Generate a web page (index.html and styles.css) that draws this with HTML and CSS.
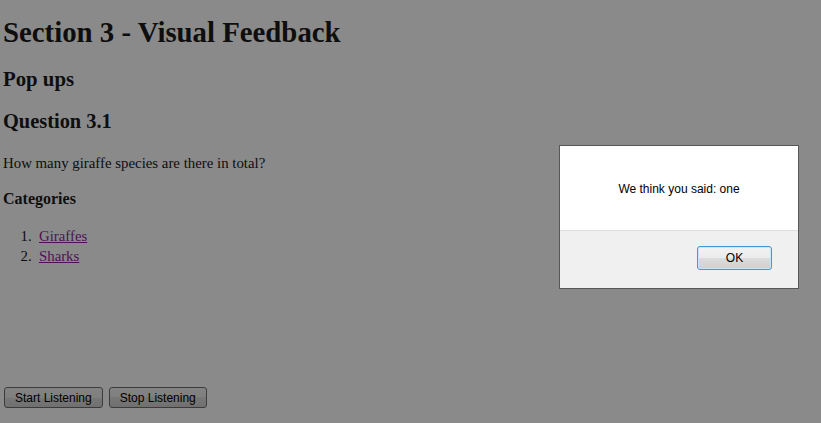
FILE: index.html
```html
<!DOCTYPE html>
<html>
<head>
<meta charset="utf-8">
<link rel="stylesheet" href="styles.css">
</head>
<body>
<div class="page">
  <h1 class="title">Section 3 - Visual Feedback</h1>
  <h2 class="sub">Pop ups</h2>
  <h2 class="sub q">Question 3.1</h2>
  <p class="text">How many giraffe species are there in total?</p>
  <h4 class="cat">Categories</h4>
  <ol class="list">
    <li><a href="#">Giraffes</a></li>
    <li><a href="#">Sharks</a></li>
  </ol>
  <div class="controls">
    <button class="btn">Start Listening</button>
    <button class="btn">Stop Listening</button>
  </div>
</div>
<div class="overlay"></div>
<div class="dialog">
  <div class="dialog-body">We think you said: one</div>
  <div class="dialog-foot"><button class="ok">OK</button></div>
</div>
</body>
</html>
```
FILE: styles.css
```css
html, body {
  margin: 0;
  padding: 0;
  background: #fff;
  height: 100%;
  overflow: hidden;
}
.page {
  padding: 0 3px;
  font-family: "Liberation Serif", "Times New Roman", serif;
  color: #1a1a1a;
  height: 423px;
  display: flex;
  flex-direction: column;
}
.title {
  font-size: 28.8px;
  line-height: 34px;
  margin: 15px 0 0 0;
  font-weight: bold;
}
.sub {
  font-size: 20.8px;
  line-height: 24px;
  margin: 18px 0 0 0;
}
.sub.q {
  font-size: 20.4px;
}
.text {
  font-size: 14.85px;
  line-height: 18px;
  margin: 21px 0 0 0;
}
.cat {
  font-size: 16px;
  line-height: 18px;
  margin: 18px 0 0 0;
}
.list {
  font-size: 14.8px;
  line-height: 20px;
  margin: 18px 0 0 0;
  padding-left: 36px;
}
.list li::marker {
  content: counter(list-item) ".  ";
}
.list a {
  color: #901f9e;
}
.controls {
  margin-top: auto;
  margin-bottom: 15px;
  display: flex;
  gap: 6px;
  padding-left: 1px;
}
.btn {
  font-family: "Liberation Sans", Arial, sans-serif;
  font-size: 12px;
  height: 21px;
  padding: 0 10px;
  border: 1px solid #707070;
  border-radius: 3px;
  background: linear-gradient(#f2f2f2, #ebebeb 50%, #dddddd 50%, #cfcfcf);
  color: #000;
}
.overlay {
  position: fixed;
  inset: 0;
  background: rgba(0, 0, 0, 0.46);
}
.dialog {
  position: absolute;
  left: 559px;
  top: 145px;
  width: 238px;
  height: 142px;
  border: 1px solid #575757;
  background: #fff;
  font-family: "Liberation Sans", Arial, sans-serif;
  font-size: 12px;
  display: flex;
  flex-direction: column;
}
.dialog-body {
  height: 85px;
  display: flex;
  align-items: center;
  justify-content: center;
  color: #000;
  border-bottom: 1px solid #dfdfdf;
  padding-top: 1px;
  box-sizing: border-box;
}
.dialog-foot {
  flex: 1;
  background: #f0f0f0;
  display: flex;
  justify-content: flex-end;
  align-items: flex-start;
  padding: 15px 26px 0 0;
}
.ok {
  width: 75px;
  height: 24px;
  font-family: "Liberation Sans", Arial, sans-serif;
  font-size: 12px;
  color: #000;
  border: 1px solid #3c9ad7;
  border-radius: 3px;
  background: linear-gradient(#f2f2f2, #ebebeb 50%, #dddddd 50%, #cfcfcf);
  box-shadow: inset 0 0 0 1px #c9e7f8;
}
```
